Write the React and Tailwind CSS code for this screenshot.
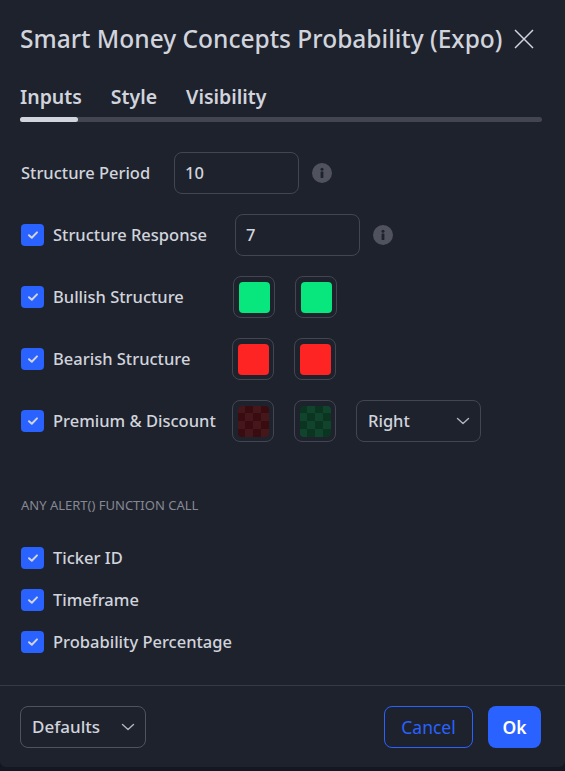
import React from 'react';

const font = { fontFamily: '"Noto Sans", "Open Sans", sans-serif' };

function Check() {
  return (
    <span className="flex h-[22px] w-[23px] shrink-0 items-center justify-center rounded-[4px] bg-[#2962ff]">
      <svg width="14" height="14" viewBox="0 0 14 14" fill="none">
        <path d="M3 7.2 L5.8 9.8 L11 4.4" stroke="#d1d4dc" strokeWidth="2" strokeLinecap="round" strokeLinejoin="round" />
      </svg>
    </span>
  );
}

function Info() {
  return (
    <span className="flex h-[20px] w-[20px] items-center justify-center rounded-full bg-[#50535e]">
      <svg width="20" height="20" viewBox="0 0 20 20">
        <circle cx="10" cy="6.2" r="1.5" fill="#1e222d" />
        <rect x="8.6" y="8.6" width="2.8" height="6.4" rx="0.6" fill="#1e222d" />
      </svg>
    </span>
  );
}

function Chevron({ color = '#b2b5be' }) {
  return (
    <svg width="14" height="8" viewBox="0 0 14 8" fill="none">
      <path d="M1.5 1.5 L7 6.5 L12.5 1.5" stroke={color} strokeWidth="1.4" strokeLinecap="round" strokeLinejoin="round" />
    </svg>
  );
}

function Swatch({ color }) {
  return (
    <div className="flex h-[42px] w-[42px] items-center justify-center rounded-[8px] border border-[#434651]">
      <div className="h-[31px] w-[31px] rounded-[4px]" style={{ background: color }} />
    </div>
  );
}

function CheckerSwatch({ a, b }) {
  const cells = Array.from({ length: 16 }, (_, i) => ((Math.floor(i / 4) + i) % 2 === 0 ? a : b));
  return (
    <div className="flex h-[42px] w-[42px] items-center justify-center rounded-[8px] border border-[#434651]">
      <div className="grid h-[31px] w-[31px] grid-cols-4 overflow-hidden rounded-[4px]">
        {cells.map((c, i) => (
          <div key={i} style={{ background: c }} />
        ))}
      </div>
    </div>
  );
}

function NumInput({ value }) {
  return (
    <div className="flex h-[42px] w-[125px] items-center rounded-[8px] border border-[#434651] px-[10px] text-[16.5px] font-medium text-[#d1d4dc]">
      {value}
    </div>
  );
}

function CheckRow({ label, children, labelWidth }) {
  return (
    <div className="flex h-[42px] items-center">
      <Check />
      <span className="ml-[9px] text-[16.5px] font-medium text-[#d1d4dc]" style={{ width: labelWidth }}>
        {label}
      </span>
      {children}
    </div>
  );
}

export default function App() {
  return (
    <div className="h-[771px] w-[565px] bg-[#131722]" style={font}>
      <div className="flex h-[767px] flex-col overflow-hidden rounded-b-[6px] bg-[#1e222d]">
        {/* Header */}
        <div className="flex items-center px-[20px] pt-[23px]">
          <h1 className="text-[24.5px] font-medium leading-[32px] text-[#d1d4dc]">
            Smart Money Concepts Probability (Expo)
          </h1>
          <svg className="ml-[11px]" width="22" height="22" viewBox="0 0 22 22" fill="none">
            <path d="M2 2 L20 20 M20 2 L2 20" stroke="#d1d4dc" strokeWidth="1.5" />
          </svg>
        </div>

        {/* Tabs */}
        <div className="pl-[20px] pr-[23px] pt-[29px]">
          <div className="flex gap-[29px] text-[19.5px] font-semibold leading-[26px] text-[#d1d4dc]">
            <span>Inputs</span>
            <span>Style</span>
            <span>Visibility</span>
          </div>
          <div className="mt-[7px] h-[5px] w-full rounded-full bg-[#434651]">
            <div className="h-[5px] w-[58px] rounded-full bg-[#d1d4dc]" />
          </div>
        </div>

        {/* Inputs */}
        <div className="flex flex-col gap-[20px] px-[21px] pt-[30px]">
          <div className="flex h-[42px] items-center">
            <span className="w-[153px] text-[16.5px] font-medium text-[#d1d4dc]">Structure Period</span>
            <NumInput value="10" />
            <span className="ml-[13px]"><Info /></span>
          </div>
          <CheckRow label="Structure Response" labelWidth="182px">
            <NumInput value="7" />
            <span className="ml-[13px]"><Info /></span>
          </CheckRow>
          <CheckRow label="Bullish Structure" labelWidth="180px">
            <div className="flex gap-[20px]">
              <Swatch color="#08e67e" />
              <Swatch color="#08e67e" />
            </div>
          </CheckRow>
          <CheckRow label="Bearish Structure" labelWidth="179px">
            <div className="flex gap-[20px]">
              <Swatch color="#ff2424" />
              <Swatch color="#ff2424" />
            </div>
          </CheckRow>
          <CheckRow label="Premium & Discount" labelWidth="179px">
            <div className="flex gap-[20px]">
              <CheckerSwatch a="#45161a" b="#380c10" />
              <CheckerSwatch a="#0b3520" b="#11442c" />
              <div className="flex h-[42px] w-[125px] items-center justify-between rounded-[8px] border border-[#434651] pl-[11px] pr-[10px] text-[16.5px] font-medium text-[#d1d4dc]">
                <span>Right</span>
                <Chevron />
              </div>
            </div>
          </CheckRow>
        </div>

        <div className="px-[21px] pt-[55px] text-[13px] leading-[16px] text-[#868993]">
          ANY ALERT() FUNCTION CALL
        </div>

        <div className="flex flex-col px-[21px] pt-[24px]">
          <CheckRow label="Ticker ID" />
          <CheckRow label="Timeframe" />
          <CheckRow label="Probability Percentage" />
        </div>

        <div className="flex-1" />

        {/* Footer */}
        <div className="flex items-center justify-between border-t border-[#363a45] pb-[19px] pl-[20px] pr-[24px] pt-[20px]">
          <div className="flex h-[42px] w-[126px] items-center justify-between rounded-[8px] border border-[#50535e] pl-[11px] pr-[10px] text-[17px] font-medium text-[#d1d4dc]">
            <span>Defaults</span>
            <Chevron />
          </div>
          <div className="flex gap-[15px]">
            <div className="flex h-[42px] w-[89px] items-center justify-center rounded-[8px] border border-[#2962ff] text-[17.5px] text-[#2962ff]">
              Cancel
            </div>
            <div className="flex h-[42px] w-[53px] items-center justify-center rounded-[8px] bg-[#2962ff] text-[17.5px] font-semibold text-white">
              Ok
            </div>
          </div>
        </div>
      </div>
    </div>
  );
}
